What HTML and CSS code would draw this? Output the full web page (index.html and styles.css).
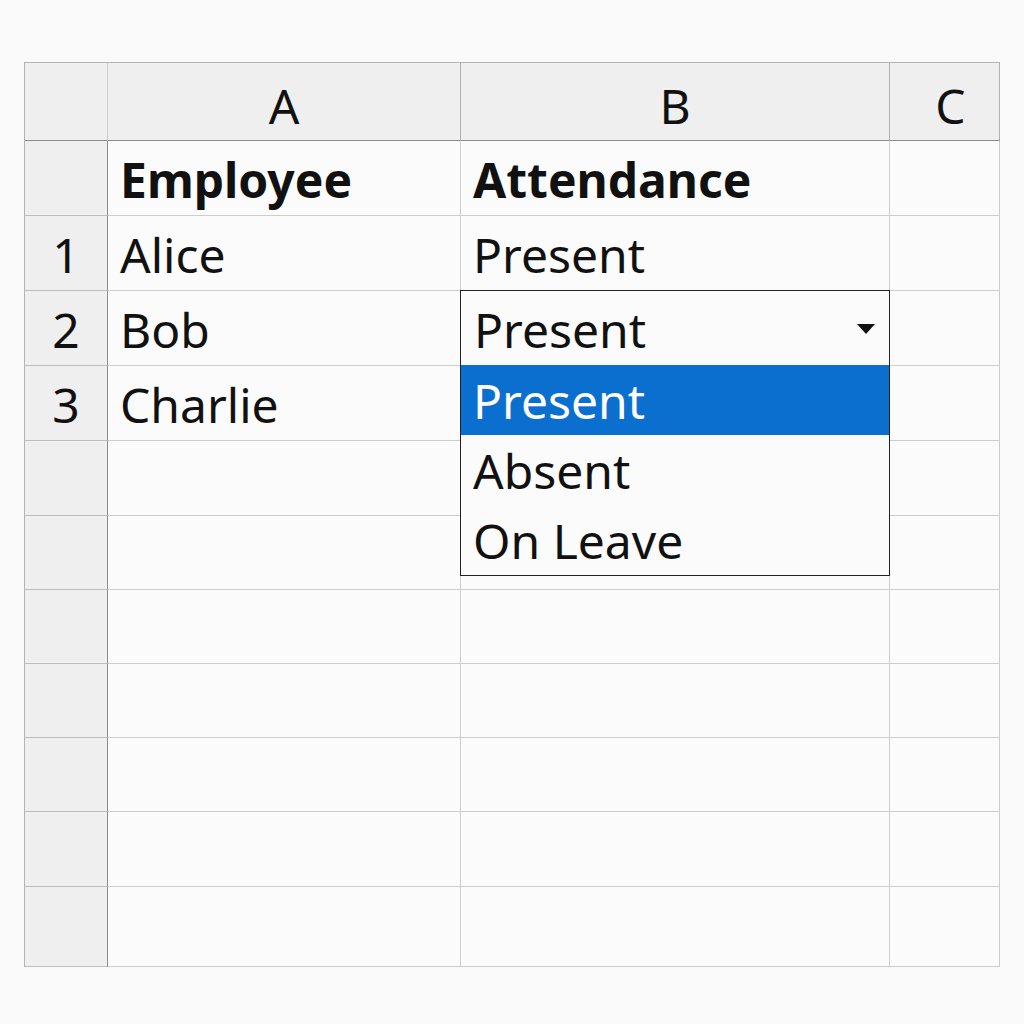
FILE: index.html
```html
<!DOCTYPE html>
<html>
<head>
<meta charset="utf-8">
<link rel="stylesheet" href="styles.css">
</head>
<body>
<div class="sheet">
  <div class="cell corner"></div>
  <div class="cell colhead">A</div>
  <div class="cell colhead">B</div>
  <div class="cell colhead colc">C</div>

  <div class="cell rowhead"></div>
  <div class="cell bold">Employee</div>
  <div class="cell bold">Attendance</div>
  <div class="cell"></div>

  <div class="cell rowhead">1</div>
  <div class="cell">Alice</div>
  <div class="cell">Present</div>
  <div class="cell"></div>

  <div class="cell rowhead">2</div>
  <div class="cell">Bob</div>
  <div class="cell active">
    <div class="select">
      <span>Present</span>
      <svg class="arrow" width="18" height="10" viewBox="0 0 18 10"><path d="M0 0 L18 0 L9 10 Z" fill="#111"/></svg>
    </div>
    <ul class="options">
      <li class="selected">Present</li>
      <li>Absent</li>
      <li>On Leave</li>
    </ul>
  </div>
  <div class="cell"></div>

  <div class="cell rowhead">3</div>
  <div class="cell">Charlie</div>
  <div class="cell"></div>
  <div class="cell"></div>

  <div class="cell rowhead"></div><div class="cell"></div><div class="cell"></div><div class="cell"></div>
  <div class="cell rowhead"></div><div class="cell"></div><div class="cell"></div><div class="cell"></div>
  <div class="cell rowhead"></div><div class="cell"></div><div class="cell"></div><div class="cell"></div>
  <div class="cell rowhead"></div><div class="cell"></div><div class="cell"></div><div class="cell"></div>
  <div class="cell rowhead"></div><div class="cell"></div><div class="cell"></div><div class="cell"></div>
  <div class="cell rowhead"></div><div class="cell"></div><div class="cell"></div><div class="cell"></div>
  <div class="cell rowhead"></div><div class="cell"></div><div class="cell"></div><div class="cell"></div>
</div>
</body>
</html>
```
FILE: styles.css
```css
html, body {
  margin: 0;
  padding: 0;
  background: #fafafa;
}
body {
  padding: 62px 0 0 24px;
  font-family: "Noto Sans", "Open Sans", sans-serif;
  color: #111;
}
.sheet {
  display: grid;
  grid-template-columns: 83px 353px 429px 110px;
  grid-template-rows: 78px 75px 75px 75px 75px 75px 74px 74px 74px 74px 75px 80px;
  width: max-content;
  border-left: 1px solid #b4b4b4;
  border-top: 1px solid #b4b4b4;
}
.cell {
  box-sizing: border-box;
  border-right: 1px solid #cdcdcd;
  border-bottom: 1px solid #cdcdcd;
  display: flex;
  align-items: center;
  padding: 4px 0 0 12px;
  font-size: 48px;
  line-height: 1;
  background: #fbfbfb;
}
.corner, .colhead {
  background: #efefef;
  border-bottom-color: #8c8c8c;
}
.colhead {
  justify-content: center;
  padding: 8px 0 0 0;
  border-right-color: #b0b0b0;
}
.colc { padding-left: 12px; }
.rowhead {
  background: #efefef;
  border-right-color: #8c8c8c;
  border-bottom-color: #bdbdbd;
  justify-content: center;
  padding: 4px 0 0 0;
}
.bold { font-weight: 700; }
.active {
  position: relative;
  padding: 0;
  overflow: visible;
}
.select {
  position: absolute;
  left: -1px;
  top: -1px;
  width: 430px;
  height: 76px;
  box-sizing: border-box;
  border: 1px solid #222;
  background: #fbfbfb;
  display: flex;
  align-items: center;
  padding: 4px 0 0 13px;
}
.arrow {
  position: absolute;
  right: 14px;
  top: 33px;
}
.options {
  position: absolute;
  left: -1px;
  top: 74px;
  width: 430px;
  margin: 0;
  padding: 0;
  list-style: none;
  box-sizing: border-box;
  border: 1px solid #222;
  border-top: none;
  background: #fbfbfb;
  z-index: 2;
}
.options li {
  height: 70px;
  display: flex;
  align-items: center;
  padding: 2px 0 0 12px;
  box-sizing: border-box;
}
.options li.selected {
  background: #0a6fcf;
  color: #fff;
  height: 70px;
}
```
